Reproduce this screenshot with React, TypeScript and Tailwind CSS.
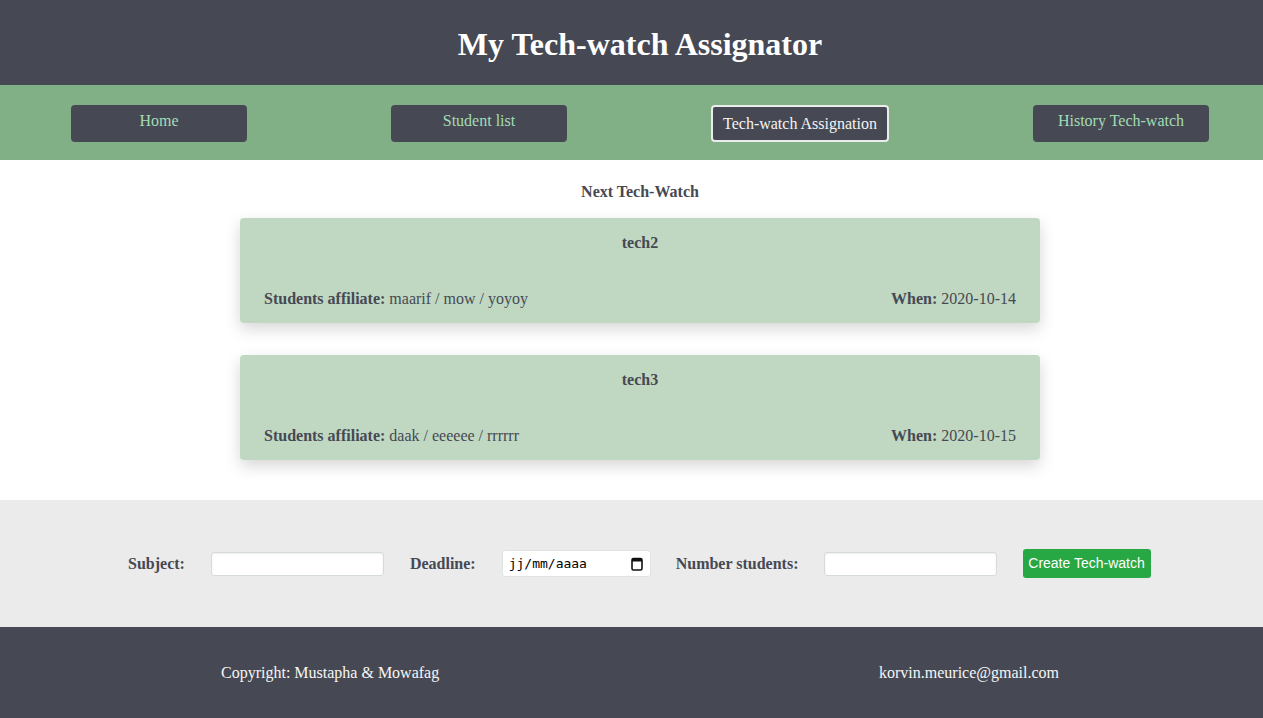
import React from 'react';

const navItems = [
  { label: 'Home', active: false, shift: 'mr-[2px]' },
  { label: 'Student list', active: false, shift: 'mr-[2px]' },
  { label: 'Tech-watch Assignation', active: true, shift: '' },
  { label: 'History Tech-watch', active: false, shift: 'ml-[2px]' },
];

const techWatches = [
  { title: 'tech2', students: 'maarif / mow / yoyoy', when: '2020-10-14' },
  { title: 'tech3', students: 'daak / eeeeee / rrrrrr', when: '2020-10-15' },
];

const CalendarIcon = () => (
  <svg width="12" height="14" viewBox="0 0 12 14" fill="none">
    <rect x="1" y="1.5" width="10" height="11.5" rx="1.5" stroke="#111" strokeWidth="1.6" />
    <rect x="1" y="1.5" width="10" height="3" fill="#111" />
  </svg>
);

export default function App() {
  return (
    <div className="w-full overflow-hidden" style={{ fontFamily: '"Liberation Serif", "Times New Roman", serif' }}>
      <div className="w-[1280px]">
        <header className="h-[85px] bg-[#464953] flex items-center justify-center">
          <h1 className="text-[32px] font-bold text-white leading-none pt-[2px]">My Tech-watch Assignator</h1>
        </header>

        <nav className="h-[75px] bg-[#81b087] grid grid-cols-4 items-center">
          {navItems.map(item => (
            <div key={item.label} className="flex justify-center">
              {item.active ? (
                <button className="w-[178px] h-[37px] mt-[1px] rounded-[4px] border-2 border-[#ececec] bg-[#464953] text-[#f4f4f4] text-base pt-[1px]">
                  {item.label}
                </button>
              ) : (
                <button className={`w-[176px] h-[37px] mt-[1px] ${item.shift} rounded-[4px] bg-[#464953] text-[#a3dcb4] text-base pb-[5px]`}>
                  {item.label}
                </button>
              )}
            </div>
          ))}
        </nav>

        <main className="h-[340px] bg-white flex flex-col items-center pt-[23px]">
          <h2 className="text-base font-bold text-[#464953] leading-[18px]">Next Tech-Watch</h2>
          <div className="flex flex-col gap-[32px] mt-[17px]">
            {techWatches.map(tw => (
              <div key={tw.title} className="w-[800px] h-[105px] bg-[#c0d8c2] rounded-[4px] shadow-[0_6px_16px_rgba(0,0,0,0.16)] flex flex-col justify-between px-[24px] pt-[13px] pb-[12px] text-[#464953]">
                <div className="text-center font-bold text-base">{tw.title}</div>
                <div className="flex justify-between text-base">
                  <span><b>Students affiliate:</b> {tw.students}</span>
                  <span><b>When:</b> {tw.when}</span>
                </div>
              </div>
            ))}
          </div>
        </main>

        <section className="h-[127px] bg-[#ebebeb] flex items-center pl-[128px] gap-[26px] text-[#464953] text-base font-bold">
          <label>Subject:</label>
          <input type="text" className="w-[173px] h-[24px] bg-white border border-[#d5dcd5] rounded-[3px] shadow-[inset_0_1px_2px_rgba(0,0,0,0.08)]" />
          <label>Deadline:</label>
          <div className="w-[149px] h-[27px] bg-white border border-[#e0e4e0] rounded-[3px] flex items-center justify-between pl-[6px] pr-[7px] font-normal text-[13px] text-black" style={{ fontFamily: '"DejaVu Sans Mono", "Liberation Mono", monospace' }}>
            <span>jj/mm/aaaa</span>
            <CalendarIcon />
          </div>
          <label className="-ml-[1px]">Number students:</label>
          <input type="text" className="w-[173px] h-[24px] -ml-[1px] bg-white border border-[#d5dcd5] rounded-[3px] shadow-[inset_0_1px_2px_rgba(0,0,0,0.08)]" />
          <button className="w-[128px] h-[29px] bg-[#28a745] text-white rounded-[3px] text-[14px] font-normal" style={{ fontFamily: '"Liberation Sans", Arial, sans-serif' }}>
            Create Tech-watch
          </button>
        </section>

        <footer className="h-[91px] bg-[#464953] flex items-center justify-between pl-[221px] pr-[221px] text-[#f6f6f6] text-base">
          <span>Copyright: Mustapha &amp; Mowafag</span>
          <span>korvin.meurice@gmail.com</span>
        </footer>
      </div>
    </div>
  );
}
